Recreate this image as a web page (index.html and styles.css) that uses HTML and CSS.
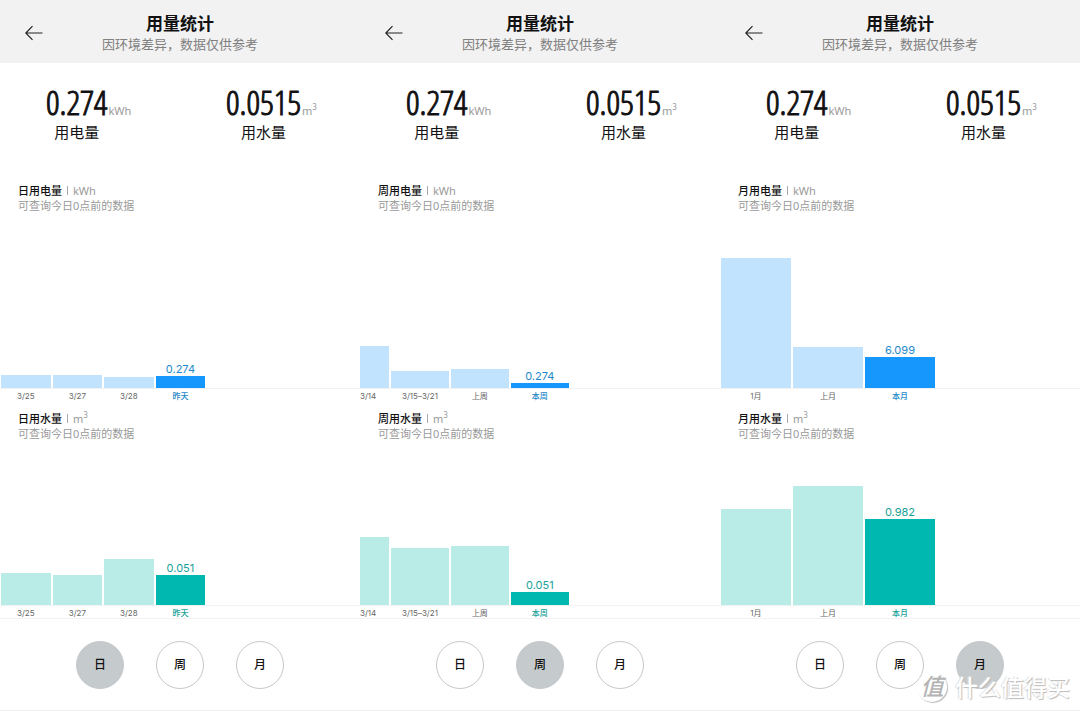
FILE: index.html
```html
<!DOCTYPE html>
<html lang="zh-CN">
<head>
<meta charset="utf-8">
<meta name="viewport" content="width=device-width, initial-scale=1">
<title>用量统计</title>
<link rel="stylesheet" href="styles.css">
</head>
<body>
<div class="panels">
  <main class="panel">
    <header class="topbar">
      <button class="back" type="button" aria-label="返回"><svg viewBox="0 0 18 16" width="18" height="16"><path d="M17.500 8H1M7.500 1.200L.8 8l6.700 6.800"/></svg></button>
      <div class="heading"><h1>用量统计</h1><p>因环境差异，数据仅供参考</p></div>
    </header>
    <section class="metrics">
      <div class="metric"><span class="number">0.274</span><span class="unit">kWh</span><span class="name">用电量</span></div>
      <div class="metric"><span class="number">0.0515</span><span class="unit">m<sup>3</sup></span><span class="name">用水量</span></div>
    </section>
    <section class="chart power">
      <h2>日用电量<span class="sep"></span><span class="measure">kWh</span></h2>
      <p class="note">可查询今日0点前的数据</p>
      <div class="plot"><div class="cols day">
        <div class="col"><div class="bar" style="height:13px"></div></div>
        <div class="col"><div class="bar" style="height:13px"></div></div>
        <div class="col"><div class="bar" style="height:11px"></div></div>
        <div class="col now"><span class="value">0.274</span><div class="bar" style="height:12px"></div></div>
      </div></div>
      <div class="cols axis day"><span>3/25</span><span>3/27</span><span>3/28</span><span class="current">昨天</span></div>
    </section>
    <section class="chart water">
      <h2>日用水量<span class="sep"></span><span class="measure">m<sup>3</sup></span></h2>
      <p class="note">可查询今日0点前的数据</p>
      <div class="plot"><div class="cols day">
        <div class="col"><div class="bar" style="height:32px"></div></div>
        <div class="col"><div class="bar" style="height:30px"></div></div>
        <div class="col"><div class="bar" style="height:46px"></div></div>
        <div class="col now"><span class="value">0.051</span><div class="bar" style="height:30px"></div></div>
      </div></div>
      <div class="cols axis day"><span>3/25</span><span>3/27</span><span>3/28</span><span class="current">昨天</span></div>
    </section>
    <nav class="periods">
      <button class="period active" type="button">日</button>
      <button class="period" type="button">周</button>
      <button class="period" type="button">月</button>
    </nav>
  </main>

  <main class="panel">
    <header class="topbar">
      <button class="back" type="button" aria-label="返回"><svg viewBox="0 0 18 16" width="18" height="16"><path d="M17.500 8H1M7.500 1.200L.8 8l6.700 6.800"/></svg></button>
      <div class="heading"><h1>用量统计</h1><p>因环境差异，数据仅供参考</p></div>
    </header>
    <section class="metrics">
      <div class="metric"><span class="number">0.274</span><span class="unit">kWh</span><span class="name">用电量</span></div>
      <div class="metric"><span class="number">0.0515</span><span class="unit">m<sup>3</sup></span><span class="name">用水量</span></div>
    </section>
    <section class="chart power">
      <h2>周用电量<span class="sep"></span><span class="measure">kWh</span></h2>
      <p class="note">可查询今日0点前的数据</p>
      <div class="plot"><div class="cols week">
        <div class="col"><div class="bar" style="height:42px"></div></div>
        <div class="col"><div class="bar" style="height:17px"></div></div>
        <div class="col"><div class="bar" style="height:19px"></div></div>
        <div class="col now"><span class="value">0.274</span><div class="bar" style="height:5px"></div></div>
      </div></div>
      <div class="cols axis week"><span>3/14</span><span>3/15–3/21</span><span>上周</span><span class="current">本周</span></div>
    </section>
    <section class="chart water">
      <h2>周用水量<span class="sep"></span><span class="measure">m<sup>3</sup></span></h2>
      <p class="note">可查询今日0点前的数据</p>
      <div class="plot"><div class="cols week">
        <div class="col"><div class="bar" style="height:68px"></div></div>
        <div class="col"><div class="bar" style="height:57px"></div></div>
        <div class="col"><div class="bar" style="height:59px"></div></div>
        <div class="col now"><span class="value">0.051</span><div class="bar" style="height:13px"></div></div>
      </div></div>
      <div class="cols axis week"><span>3/14</span><span>3/15–3/21</span><span>上周</span><span class="current">本周</span></div>
    </section>
    <nav class="periods">
      <button class="period" type="button">日</button>
      <button class="period active" type="button">周</button>
      <button class="period" type="button">月</button>
    </nav>
  </main>

  <main class="panel">
    <header class="topbar">
      <button class="back" type="button" aria-label="返回"><svg viewBox="0 0 18 16" width="18" height="16"><path d="M17.500 8H1M7.500 1.200L.8 8l6.700 6.800"/></svg></button>
      <div class="heading"><h1>用量统计</h1><p>因环境差异，数据仅供参考</p></div>
    </header>
    <section class="metrics">
      <div class="metric"><span class="number">0.274</span><span class="unit">kWh</span><span class="name">用电量</span></div>
      <div class="metric"><span class="number">0.0515</span><span class="unit">m<sup>3</sup></span><span class="name">用水量</span></div>
    </section>
    <section class="chart power">
      <h2>月用电量<span class="sep"></span><span class="measure">kWh</span></h2>
      <p class="note">可查询今日0点前的数据</p>
      <div class="plot"><div class="cols month">
        <div class="col"><div class="bar" style="height:130px"></div></div>
        <div class="col"><div class="bar" style="height:41px"></div></div>
        <div class="col now"><span class="value">6.099</span><div class="bar" style="height:31px"></div></div>
      </div></div>
      <div class="cols axis month"><span>1月</span><span>上月</span><span class="current">本月</span></div>
    </section>
    <section class="chart water">
      <h2>月用水量<span class="sep"></span><span class="measure">m<sup>3</sup></span></h2>
      <p class="note">可查询今日0点前的数据</p>
      <div class="plot"><div class="cols month">
        <div class="col"><div class="bar" style="height:96px"></div></div>
        <div class="col"><div class="bar" style="height:119px"></div></div>
        <div class="col now"><span class="value">0.982</span><div class="bar" style="height:86px"></div></div>
      </div></div>
      <div class="cols axis month"><span>1月</span><span>上月</span><span class="current">本月</span></div>
    </section>
    <nav class="periods">
      <button class="period" type="button">日</button>
      <button class="period" type="button">周</button>
      <button class="period active" type="button">月</button>
    </nav>
    <div class="watermark"><span class="seal">值</span><span class="brand">什么值得买</span></div>
  </main>
</div>
</body>
</html>
```
FILE: styles.css
```css
* { box-sizing: border-box; }

body {
  margin: 0;
  background: #fff;
  color: #111;
  font-family: "Noto Sans", "Noto Sans CJK SC", sans-serif;
}

h1, h2, p { margin: 0; }

button {
  padding: 0;
  border: 0;
  background: none;
  color: inherit;
  font: inherit;
  cursor: pointer;
}

sup {
  font-size: 8px;
  line-height: 1;
  vertical-align: 5px;
}

.panels {
  display: grid;
  grid-template-columns: repeat(3, minmax(0, 1fr));
}

.panel { position: relative; }

.topbar {
  display: grid;
  grid-template-columns: 43px 1fr 43px;
  align-items: center;
  padding: 13px 0 10px;
  background: #f2f2f2;
}

.back {
  display: flex;
  justify-content: flex-end;
}

.back svg {
  fill: none;
  stroke: #222;
  stroke-width: 1.2;
}

.heading { text-align: center; }

.heading h1 {
  font-size: 17px;
  font-weight: 700;
  line-height: 22px;
}

.heading p {
  color: #808080;
  font-size: 13px;
  line-height: 18px;
}

.metrics {
  display: grid;
  grid-template-columns: 1fr 1fr;
  padding: 17px 0 43px;
}

.metric {
  display: grid;
  grid-template-columns: max-content max-content;
  align-items: baseline;
  justify-items: center;
  padding-left: 46px;
}

.number {
  font-family: "Open Sans Condensed Light", "Roboto Condensed", sans-serif;
  font-size: 34px;
  line-height: 44px;
  -webkit-text-stroke: 1px #111;
}

.unit {
  padding-left: 1px;
  color: #999;
  font-size: 11px;
  line-height: 16px;
}

.name {
  font-size: 15px;
  line-height: 16px;
}

.chart h2 {
  display: flex;
  align-items: center;
  height: 15px;
  padding-left: 18px;
  font-size: 11px;
  font-weight: 500;
  line-height: 15px;
}

.sep {
  width: 1px;
  height: 9px;
  margin: 0 5px;
  background: #aaa;
}

.measure {
  color: #999;
  font-size: 11px;
  font-weight: 400;
}

.note {
  padding-left: 18px;
  color: #999;
  font-size: 11px;
  line-height: 15px;
}

.power {
  --bar: #c1e3fe;
  --accent: #1697fe;
  --label: #2488c8;
  --plot: 175px;
  padding-bottom: 10px;
}

.water {
  --bar: #baece7;
  --accent: #00b8b0;
  --label: #16a198;
  --plot: 164px;
}

.plot {
  display: flex;
  height: calc(var(--plot) + 1px);
  border-bottom: 1px solid #f2f2f2;
}

.cols {
  display: grid;
  gap: 2px;
}

.day {
  grid-template-columns: repeat(4, 1fr);
  width: 57%;
  padding-left: 1px;
}

.week {
  grid-template-columns: 1fr 2fr 2fr 2fr;
  width: 58%;
}

.month {
  grid-template-columns: repeat(3, 1fr);
  width: 60%;
  padding: 0 1px;
}

.col {
  display: flex;
  flex-direction: column;
  justify-content: flex-end;
}

.bar { background: var(--bar); }

.now .bar { background: var(--accent); }

.value {
  color: var(--label);
  font-family: Inter, "Noto Sans", sans-serif;
  font-size: 11px;
  line-height: 14px;
  text-align: center;
}

.axis {
  color: #666;
  font-family: Inter, "Noto Sans CJK SC", sans-serif;
  font-size: 8px;
  line-height: 14px;
  height: 12px;
  text-align: center;
}

.axis.week span:first-child { text-align: left; }

.axis .current {
  color: var(--label);
  font-weight: 500;
}

.periods {
  display: flex;
  justify-content: center;
  gap: 32px;
  padding: 22px 0 21px;
  border-top: 1px solid #f2f2f2;
  border-bottom: 1px solid #f2f2f2;
}

.period {
  width: 48px;
  height: 48px;
  border: 1px solid #c5c9cb;
  border-radius: 50%;
  font-size: 12px;
  font-weight: 500;
  line-height: 16px;
}

.period.active { background: #c5cacd; }

.watermark {
  position: absolute;
  right: 10px;
  bottom: 9px;
  display: flex;
  align-items: center;
  gap: 8px;
  pointer-events: none;
}

.seal {
  width: 30px;
  height: 30px;
  border-radius: 50%;
  background: #fff;
  box-shadow: 1px 1px 1px #bbb;
  color: #b4b4b4;
  font-size: 23px;
  font-style: italic;
  font-weight: 500;
  line-height: 28px;
  text-align: center;
}

.brand {
  color: #fff;
  font-size: 23px;
  font-weight: 500;
  line-height: 24px;
  text-shadow: 1px 1px 1px #bbb, -1px 0 1px #ddd;
}
```
